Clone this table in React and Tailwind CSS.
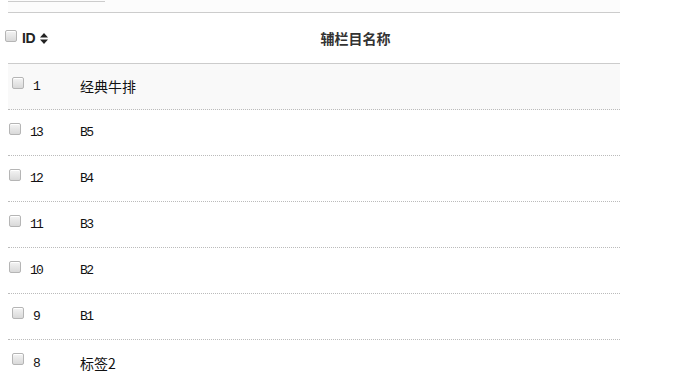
import React from 'react';

const rows = [
  { id: 1, name: '经典牛排', cjk: true },
  { id: 13, name: 'B5' },
  { id: 12, name: 'B4' },
  { id: 11, name: 'B3' },
  { id: 10, name: 'B2' },
  { id: 9, name: 'B1' },
  { id: 8, name: '标签2', cjk: true },
];

function Box() {
  return (
    <span className="inline-block w-[12px] h-[12px] shrink-0 rounded-[2px] border border-[#b5b5b5] bg-gradient-to-b from-[#f4f4f4] to-[#d9d9d9] shadow-[inset_0_1px_0_#fff]" />
  );
}

function SortIcon() {
  return (
    <svg width="8" height="11" viewBox="0 0 8 11" className="ml-[5px] shrink-0">
      <path d="M4 0 L8 4.5 L0 4.5 Z" fill="#222" />
      <path d="M0 6.5 L8 6.5 L4 11 Z" fill="#222" />
    </svg>
  );
}

export default function App() {
  return (
    <div className="w-[675px] h-[381px] bg-white overflow-hidden" style={{ fontFamily: '"Liberation Mono", "Noto Sans CJK SC", monospace' }}>
      <div className="ml-[8px] w-[612px] h-[12px] bg-[#fcfcfc] pt-[1px]">
        <div className="w-[97px] h-[1px] bg-[#cccccc]" />
      </div>
      <div className="ml-[8px] w-[612px]">
        <div className="flex h-[52px] border-t border-b border-[#cccccc] bg-white">
          <div className="w-[67px] flex items-center">
            <div className="flex items-center -ml-[3px]">
              <span className="mr-[5px]"><Box /></span>
              <span className="text-[14px] font-bold text-[#222] leading-none tracking-[-0.5px]" style={{ fontFamily: '"Liberation Sans", Arial, sans-serif' }}>ID</span>
              <SortIcon />
            </div>
          </div>
          <div className="flex-1 flex items-center justify-center pl-[16px]">
            <span className="text-[14px] font-bold text-[#333]" style={{ fontFamily: '"Noto Sans CJK SC", sans-serif' }}>辅栏目名称</span>
          </div>
        </div>
        {rows.map((r, i) => (
          <div
            key={r.id}
            className={`flex h-[46px] ${i === 0 ? 'bg-[#f9f9f9]' : 'bg-white'} ${i < rows.length - 1 ? 'border-b border-dotted border-[#bbbbbb]' : ''}`}
          >
            <div className="w-[67px] flex items-center">
              <div className="w-[35px] flex items-center justify-center">
                <span className="mr-[9px] -mt-[4px]"><Box /></span>
                <span className="text-[13px] text-[#111] tracking-[-1.8px] leading-none">{r.id}</span>
              </div>
            </div>
            <div className="flex-1 flex items-center pl-[5px]">
              <span
                className={`${r.cjk ? 'text-[14px]' : 'text-[13px] tracking-[-1.6px]'} text-[#111]`}
                style={{ fontFamily: r.cjk ? '"Noto Sans CJK SC", "Liberation Mono", sans-serif' : '"Liberation Mono", monospace' }}
              >
                {r.name}
              </span>
            </div>
          </div>
        ))}
      </div>
    </div>
  );
}
